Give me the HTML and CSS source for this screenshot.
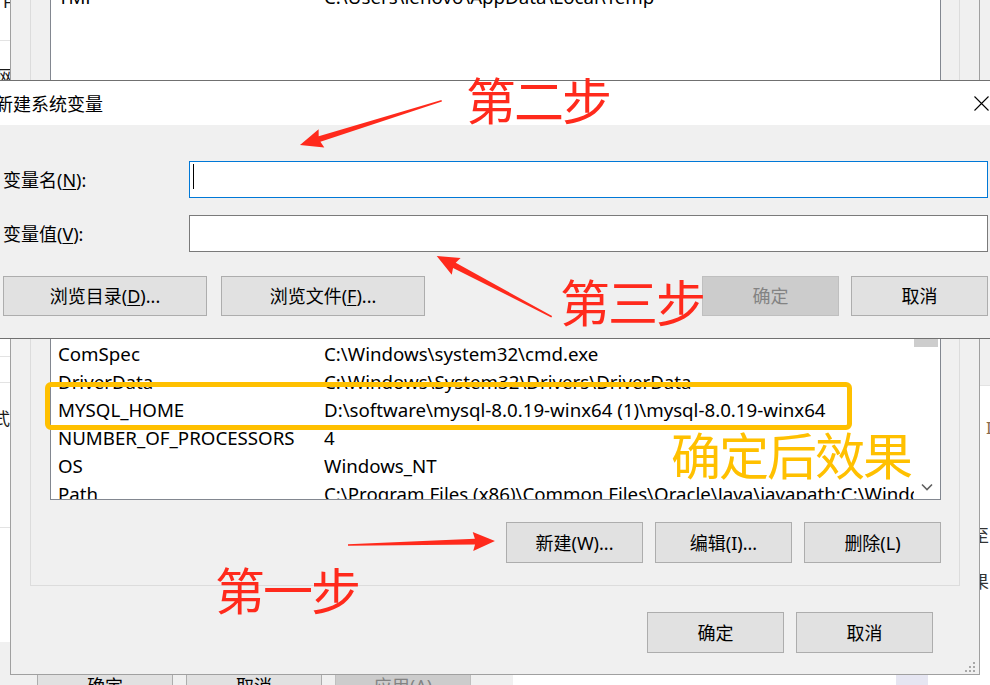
FILE: index.html
```html
<!DOCTYPE html>
<html lang="zh-CN">
<head>
<meta charset="utf-8">
<title>新建系统变量</title>
<link rel="stylesheet" href="styles.css">
</head>
<body>
<div class="desk">

  <div class="win bg-left">
    <div class="side-cell side-cell--a"><span class="frag frag--f">F</span></div>
    <div class="side-cell side-cell--b"><span class="frag frag--wang">网</span></div>
    <div class="side-cell side-cell--c"></div>
    <div class="side-cell side-cell--d"><span class="frag frag--shi">式</span></div>
    <div class="side-cell side-cell--e"></div>
  </div>

  <div class="win bg-bottom-right"><div class="lav"></div></div>

  <div class="win bg-right">
    <div class="bg-right__gray"></div>
    <div class="bg-right__white">
      <span class="frag frag--i">I</span>
      <span class="frag frag--zhi">至</span>
      <span class="frag frag--guo">果</span>
    </div>
  </div>

  <div class="win bg-bottom">
    <div class="btn btn--bg">确定</div>
    <div class="btn btn--bg">取消</div>
    <div class="btn btn--bg btn--disabled">应用(A)</div>
  </div>

  <div class="win env">
    <div class="group group--user">
      <div class="list list--user">
        <div class="row"><span class="c-name">TEMP</span><span class="c-val">C:\Users\lenovo\AppData\Local\Temp</span></div>
        <div class="row"><span class="c-name">TMP</span><span class="c-val">C:\Users\lenovo\AppData\Local\Temp</span></div>
      </div>
    </div>
    <div class="group group--sys">
      <div class="list list--sys">
        <div class="list__rows">
          <div class="row"><span class="c-name">变量</span><span class="c-val">值</span></div>
          <div class="row"><span class="c-name">ComSpec</span><span class="c-val">C:\Windows\system32\cmd.exe</span></div>
          <div class="row"><span class="c-name">DriverData</span><span class="c-val">C:\Windows\System32\Drivers\DriverData</span></div>
          <div class="row"><span class="c-name">MYSQL_HOME</span><span class="c-val">D:\software\mysql-8.0.19-winx64 (1)\mysql-8.0.19-winx64</span></div>
          <div class="row"><span class="c-name">NUMBER_OF_PROCESSORS</span><span class="c-val">4</span></div>
          <div class="row"><span class="c-name">OS</span><span class="c-val">Windows_NT</span></div>
          <div class="row"><span class="c-name">Path</span><span class="c-val">C:\Program Files (x86)\Common Files\Oracle\Java\javapath;C:\Windows\system32;C:\Windows</span></div>
        </div>
        <div class="vscroll">
          <div class="vscroll__thumb"></div>
          <div class="vscroll__down">
            <svg width="12" height="8" viewBox="0 0 12 8"><path d="M1 1.5 L6 6.5 L11 1.5" fill="none" stroke="#606060" stroke-width="1.6"/></svg>
          </div>
        </div>
      </div>
      <div class="btn-row btn-row--group">
        <div class="btn btn--md">新建(W)...</div>
        <div class="btn btn--md">编辑(I)...</div>
        <div class="btn btn--md">删除(L)</div>
      </div>
    </div>
    <div class="btn-row btn-row--dialog">
      <div class="btn btn--md">确定</div>
      <div class="btn btn--md">取消</div>
    </div>
    <svg class="grip" width="12" height="12" viewBox="0 0 12 12">
      <rect x="9" y="1" width="2" height="2" fill="#a8a8a8"/>
      <rect x="5" y="5" width="2" height="2" fill="#a8a8a8"/>
      <rect x="9" y="5" width="2" height="2" fill="#a8a8a8"/>
      <rect x="1" y="9" width="2" height="2" fill="#a8a8a8"/>
      <rect x="5" y="9" width="2" height="2" fill="#a8a8a8"/>
      <rect x="9" y="9" width="2" height="2" fill="#a8a8a8"/>
    </svg>
  </div>

  <div class="win newvar">
    <div class="newvar__title">
      <span class="newvar__title-text">新建系统变量</span>
      <svg class="close" width="15" height="15" viewBox="0 0 15 15"><path d="M0.5 0.5 L14.5 14.5 M14.5 0.5 L0.5 14.5" stroke="#000" stroke-width="1.1"/></svg>
    </div>
    <div class="newvar__body">
      <div class="field">
        <span class="field__label">变量名(<u>N</u>):</span>
        <div class="field__input field__input--focus"><span class="caret"></span></div>
      </div>
      <div class="field">
        <span class="field__label">变量值(<u>V</u>):</span>
        <div class="field__input"></div>
      </div>
      <div class="newvar__buttons">
        <div class="btn btn--wide">浏览目录(<u>D</u>)...</div>
        <div class="btn btn--wide">浏览文件(<u>F</u>)...</div>
        <div class="spacer"></div>
        <div class="btn btn--sm btn--disabled">确定</div>
        <div class="btn btn--sm">取消</div>
      </div>
    </div>
  </div>

  <div class="frame"></div>

  <svg class="arrows" width="990" height="685" viewBox="0 0 990 685">
    <polygon transform="translate(441.7 100.7) rotate(162.6)" points="0,-0.8 128,-2.9 126,-9.5 148.5,0 126,9.5 128,2.9 0,0.8" fill="#ff2a1c"/>
    <polygon transform="translate(551.7 316.7) rotate(-152.2)" points="0,-0.8 110,-2.9 108,-9.5 130,0 108,9.5 110,2.9 0,0.8" fill="#ff2a1c"/>
    <polygon transform="translate(348 545) rotate(-1.56)" points="0,-0.8 127,-2.9 125,-9.5 147,0 125,9.5 127,2.9 0,0.8" fill="#ff2a1c"/>
  </svg>

  <div class="note note--red note--two">第二步</div>
  <div class="note note--red note--three">第三步</div>
  <div class="note note--red note--one">第一步</div>
  <div class="note note--orange note--result">确定后效果</div>

</div>
</body>
</html>
```

FILE: styles.css
```css
* { box-sizing: border-box; }
html, body { margin: 0; padding: 0; }
body {
  width: 990px;
  height: 685px;
  overflow: hidden;
  background: #fff;
  font-family: "Noto Sans", "Noto Sans CJK SC", sans-serif;
  font-size: 18px;
  color: #000;
}
u { text-decoration-thickness: 1px; text-underline-offset: 2px; }

.desk { position: relative; width: 990px; height: 685px; overflow: hidden; }
.win { position: absolute; }

/* ---------- background windows ---------- */
.bg-left {
  left: 0; top: 0; width: 10px; height: 642px;
  background: #fff;
  display: flex; flex-direction: column;
  overflow: hidden;
}
.side-cell { border-bottom: 1px solid #e3e3e3; flex: none; }
.side-cell--a { height: 41px; }
.side-cell--b { height: 316px; }
.side-cell--c { height: 26px; }
.side-cell--d { height: 145px; }
.side-cell--e { flex: 1; border-bottom: 0; }
.frag { display: block; font-size: 17px; line-height: 17px; color: #1a1a1a; white-space: nowrap; }
.frag--f { margin: -7px 0 0 3px; }
.frag--wang { margin: 27px 0 0 -3px; }
.frag--shi { margin: 27px 0 0 -7px; }

.bg-right {
  left: 980px; top: 0; width: 10px; height: 685px;
  display: flex; flex-direction: column;
  overflow: hidden;
}
.bg-right__gray { height: 385px; background: #f0f0f0; flex: none; }
.bg-right__white { flex: 1; background: #fff; border-top: 1px solid #e3e3e3; }
.frag--i { margin: 33px 0 0 6px; color: #8a6a4a; }
.frag--zhi { margin: 91px 0 0 -8px; color: #333; }
.frag--guo { margin: 29px 0 0 -8px; color: #333; }

.bg-bottom {
  left: 0; top: 642px; width: 513px; height: 43px;
  background: #f0f0f0;
  display: flex; gap: 13px;
  padding: 23px 0 0 37px;
}
.btn--bg { width: 136px; height: 41px; flex: none; }

.bg-bottom-right {
  left: 513px; top: 642px; width: 477px; height: 43px;
  background: #fff;
  padding: 31px 0 0 383px;
}
.lav { width: 32px; height: 12px; background: #e6e6f2; }

/* ---------- buttons ---------- */
.btn {
  display: flex; align-items: center; justify-content: center;
  background: #e1e1e1;
  border: 1px solid #adadad;
  font-size: 18px;
  line-height: 24px;
  white-space: nowrap;
  color: #000;
  flex: none;
}
.btn--disabled { background: #cccccc; border-color: #bfbfbf; color: #838383; }

/* ---------- environment variables dialog ---------- */
.env {
  left: 10px; top: -60px;
  width: 970px; height: 735px;
  border: 1px solid #a0a0a0;
  background: #f0f0f0;
  padding: 0 19px;
  display: flex; flex-direction: column;
}
.group { border: 1px solid #dcdcdc; padding: 0 18px 0 19px; flex: none; }
.group--user { padding-top: 11px; padding-bottom: 10px; }
.group--sys { margin-top: 10px; padding-top: 35px; padding-bottom: 22px; }
.list { background: #fff; border: 1px solid #828790; overflow: hidden; }
.list--user { height: 300px; }
.list--sys { height: 190px; display: flex; }
.list__rows { flex: 1; min-width: 0; overflow: hidden; }
.row {
  display: flex; align-items: center;
  height: 28px;
  padding-left: 7px;
  white-space: nowrap;
  font-size: 18.7px;
}
.c-name { width: 266px; flex: none; }
.c-val { flex: none; }
.vscroll { width: 26px; flex: none; display: flex; flex-direction: column; align-items: flex-start; }
.vscroll__thumb { width: 24px; height: 36px; background: #cdcdcd; }
.vscroll__down { margin-top: auto; height: 24px; width: 26px; display: flex; align-items: center; justify-content: center; }

.btn-row { display: flex; justify-content: flex-end; gap: 12px; }
.btn-row--group { margin-top: 22px; }
.btn-row--dialog { margin-top: 26px; padding-right: 27px; }
.btn--md { width: 137px; height: 41px; }
.grip { position: absolute; right: 3px; bottom: 1px; }

/* ---------- new system variable dialog ---------- */
.newvar {
  left: -10px; top: 80px;
  width: 1010px; height: 259px;
  border: 1px solid #707070;
  background: #f0f0f0;
  display: flex; flex-direction: column;
}
.newvar__title {
  height: 44px; flex: none;
  background: #fff;
  display: flex; align-items: center;
  padding: 0 10px 0 4px;
}
.newvar__title-text { flex: 1; font-size: 18px; }
.close { flex: none; }
.newvar__body { padding: 36px 11px 0 12px; }
.field { display: flex; align-items: center; }
.field + .field { margin-top: 17px; }
.field__label { width: 186px; flex: none; font-size: 18px; margin-top: -2px; }
.field__input {
  flex: 1; height: 37px;
  background: #fff;
  border: 1px solid #7a7a7a;
  display: flex; align-items: flex-start;
}
.field__input--focus { border-color: #0078d7; }
.caret { width: 1px; height: 25px; background: #000; margin: 2px 0 0 3px; }
.newvar__buttons { display: flex; margin-top: 24px; }
.btn--wide { width: 204px; height: 40px; }
.btn--wide + .btn--wide { margin-left: 14px; }
.spacer { flex: 1; }
.btn--sm { width: 137px; height: 40px; }
.btn--sm + .btn--sm { margin-left: 12px; }

/* ---------- annotations ---------- */
.frame {
  position: absolute;
  left: 45px; top: 382px;
  width: 807px; height: 48px;
  border: 5px solid #ffc000;
  border-radius: 6px;
}
.arrows { position: absolute; left: 0; top: 0; pointer-events: none; }
.note {
  position: absolute;
  font-family: "Noto Sans CJK SC", sans-serif;
  font-size: 50px;
  line-height: 50px;
  letter-spacing: -2px;
  white-space: nowrap;
}
.note--red { color: #ff2a1c; }
.note--orange { color: #ffc000; }
.note--two { left: 466px; top: 73px; }
.note--three { left: 560px; top: 275px; }
.note--one { left: 215px; top: 563px; }
.note--result { left: 671px; top: 428px; }
```
